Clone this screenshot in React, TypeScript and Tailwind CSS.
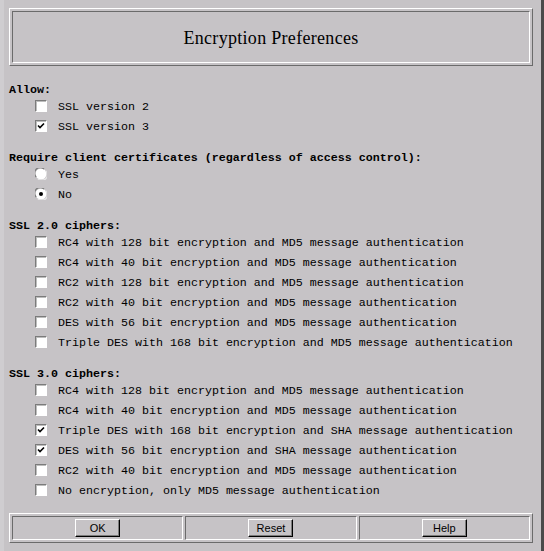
import React from 'react'

const mono = { fontFamily: '"Liberation Mono", "Courier New", monospace' }

const Check = ({ on }: { on?: boolean }) => (
  <span className="w-[12px] h-[12px] bg-white border-t border-l border-[#7b7b7b] border-b border-r border-b-white border-r-white shadow-[inset_1px_1px_0_#bdbdbd] flex items-center justify-center">
    {on && (
      <svg width="8" height="8" viewBox="0 0 8 8">
        <path d="M1 3.5 L3 5.5 L7 1.5" stroke="#000" strokeWidth="1.6" fill="none" />
      </svg>
    )}
  </span>
)

const Radio = ({ on }: { on?: boolean }) => (
  <svg width="12" height="12" viewBox="0 0 12 12">
    <circle cx="6" cy="6" r="5.5" fill="#fff" />
    <path d="M1.2 9 A5.3 5.3 0 0 1 9 1.2" stroke="#7b7b7b" strokeWidth="1.2" fill="none" />
    <path d="M10.8 3 A5.3 5.3 0 0 1 3 10.8" stroke="#e6e6e6" strokeWidth="1.2" fill="none" />
    {on && <circle cx="6" cy="6" r="2" fill="#000" />}
  </svg>
)

const Row = ({ children, kind = 'check', on }: { children: React.ReactNode; kind?: 'check' | 'radio'; on?: boolean }) => (
  <div className="h-5 flex items-center">
    <div className="w-[26px]" />
    <div className="w-[23px] flex items-center -translate-y-[1px]">{kind === 'check' ? <Check on={on} /> : <Radio on={on} />}</div>
    <span className="text-[11.67px] text-black whitespace-nowrap translate-y-[1px]">{children}</span>
  </div>
)

const Heading = ({ children }: { children: React.ReactNode }) => (
  <div className="h-[14px] leading-[14px] text-[11.67px] font-bold text-black whitespace-nowrap">{children}</div>
)

const Btn = ({ label }: { label: string }) => (
  <button className="w-[45px] h-[18px] bg-[#c6c3c6] border border-t-white border-l-white border-b-black border-r-black shadow-[inset_-1px_-1px_0_#7b7b7b] text-[11px] text-black flex items-center justify-center" style={{ fontFamily: '"Liberation Sans", Arial, sans-serif' }}>
    {label}
  </button>
)

const ssl2 = [
  'RC4 with 128 bit encryption and MD5 message authentication',
  'RC4 with 40 bit encryption and MD5 message authentication',
  'RC2 with 128 bit encryption and MD5 message authentication',
  'RC2 with 40 bit encryption and MD5 message authentication',
  'DES with 56 bit encryption and MD5 message authentication',
  'Triple DES with 168 bit encryption and MD5 message authentication',
]

const ssl3: [string, boolean][] = [
  ['RC4 with 128 bit encryption and MD5 message authentication', false],
  ['RC4 with 40 bit encryption and MD5 message authentication', false],
  ['Triple DES with 168 bit encryption and SHA message authentication', true],
  ['DES with 56 bit encryption and SHA message authentication', true],
  ['RC2 with 40 bit encryption and MD5 message authentication', false],
  ['No encryption, only MD5 message authentication', false],
]

export default function App() {
  return (
    <div className="w-[544px] h-[551px] bg-[#c6c3c6] overflow-hidden border-l-[4px] border-l-[#cfcdd0] border-r-[3px] border-r-[#4a4a4a] flex flex-col pl-[5px] pr-[5px] pt-[8px]" style={mono}>
      {/* Header */}
      <div className="w-[524px] h-[58px] border border-t-white border-l-white border-b-[#6b6b6b] border-r-[#6b6b6b] p-[2px]">
        <div className="w-full h-full border border-t-[#6b6b6b] border-l-[#6b6b6b] border-b-white border-r-white flex items-center justify-center">
          <h1 className="text-[18px] text-black tracking-[0.3px] translate-y-[1px]" style={{ fontFamily: '"Liberation Serif", "Times New Roman", serif' }}>
            Encryption Preferences
          </h1>
        </div>
      </div>

      <div className="mt-[17px] flex flex-col">
        <Heading>Allow:</Heading>
        <Row>SSL version 2</Row>
        <Row on>SSL version 3</Row>

        <div className="mt-[14px]">
          <Heading>Require client certificates (regardless of access control):</Heading>
        </div>
        <Row kind="radio">Yes</Row>
        <Row kind="radio" on>No</Row>

        <div className="mt-[14px]">
          <Heading>SSL 2.0 ciphers:</Heading>
        </div>
        {ssl2.map(t => <Row key={t}>{t}</Row>)}

        <div className="mt-[14px]">
          <Heading>SSL 3.0 ciphers:</Heading>
        </div>
        {ssl3.map(([t, on]) => <Row key={t} on={on}>{t}</Row>)}
      </div>

      {/* Footer */}
      <div className="mt-[12px] w-[524px] h-[30px] border border-t-white border-l-white border-b-[#6b6b6b] border-r-[#6b6b6b] p-[2px] flex gap-[2px]">
        {['OK', 'Reset', 'Help'].map(l => (
          <div key={l} className="flex-1 border border-t-[#6b6b6b] border-l-[#6b6b6b] border-b-white border-r-white flex items-center justify-center">
            <Btn label={l} />
          </div>
        ))}
      </div>
    </div>
  )
}
